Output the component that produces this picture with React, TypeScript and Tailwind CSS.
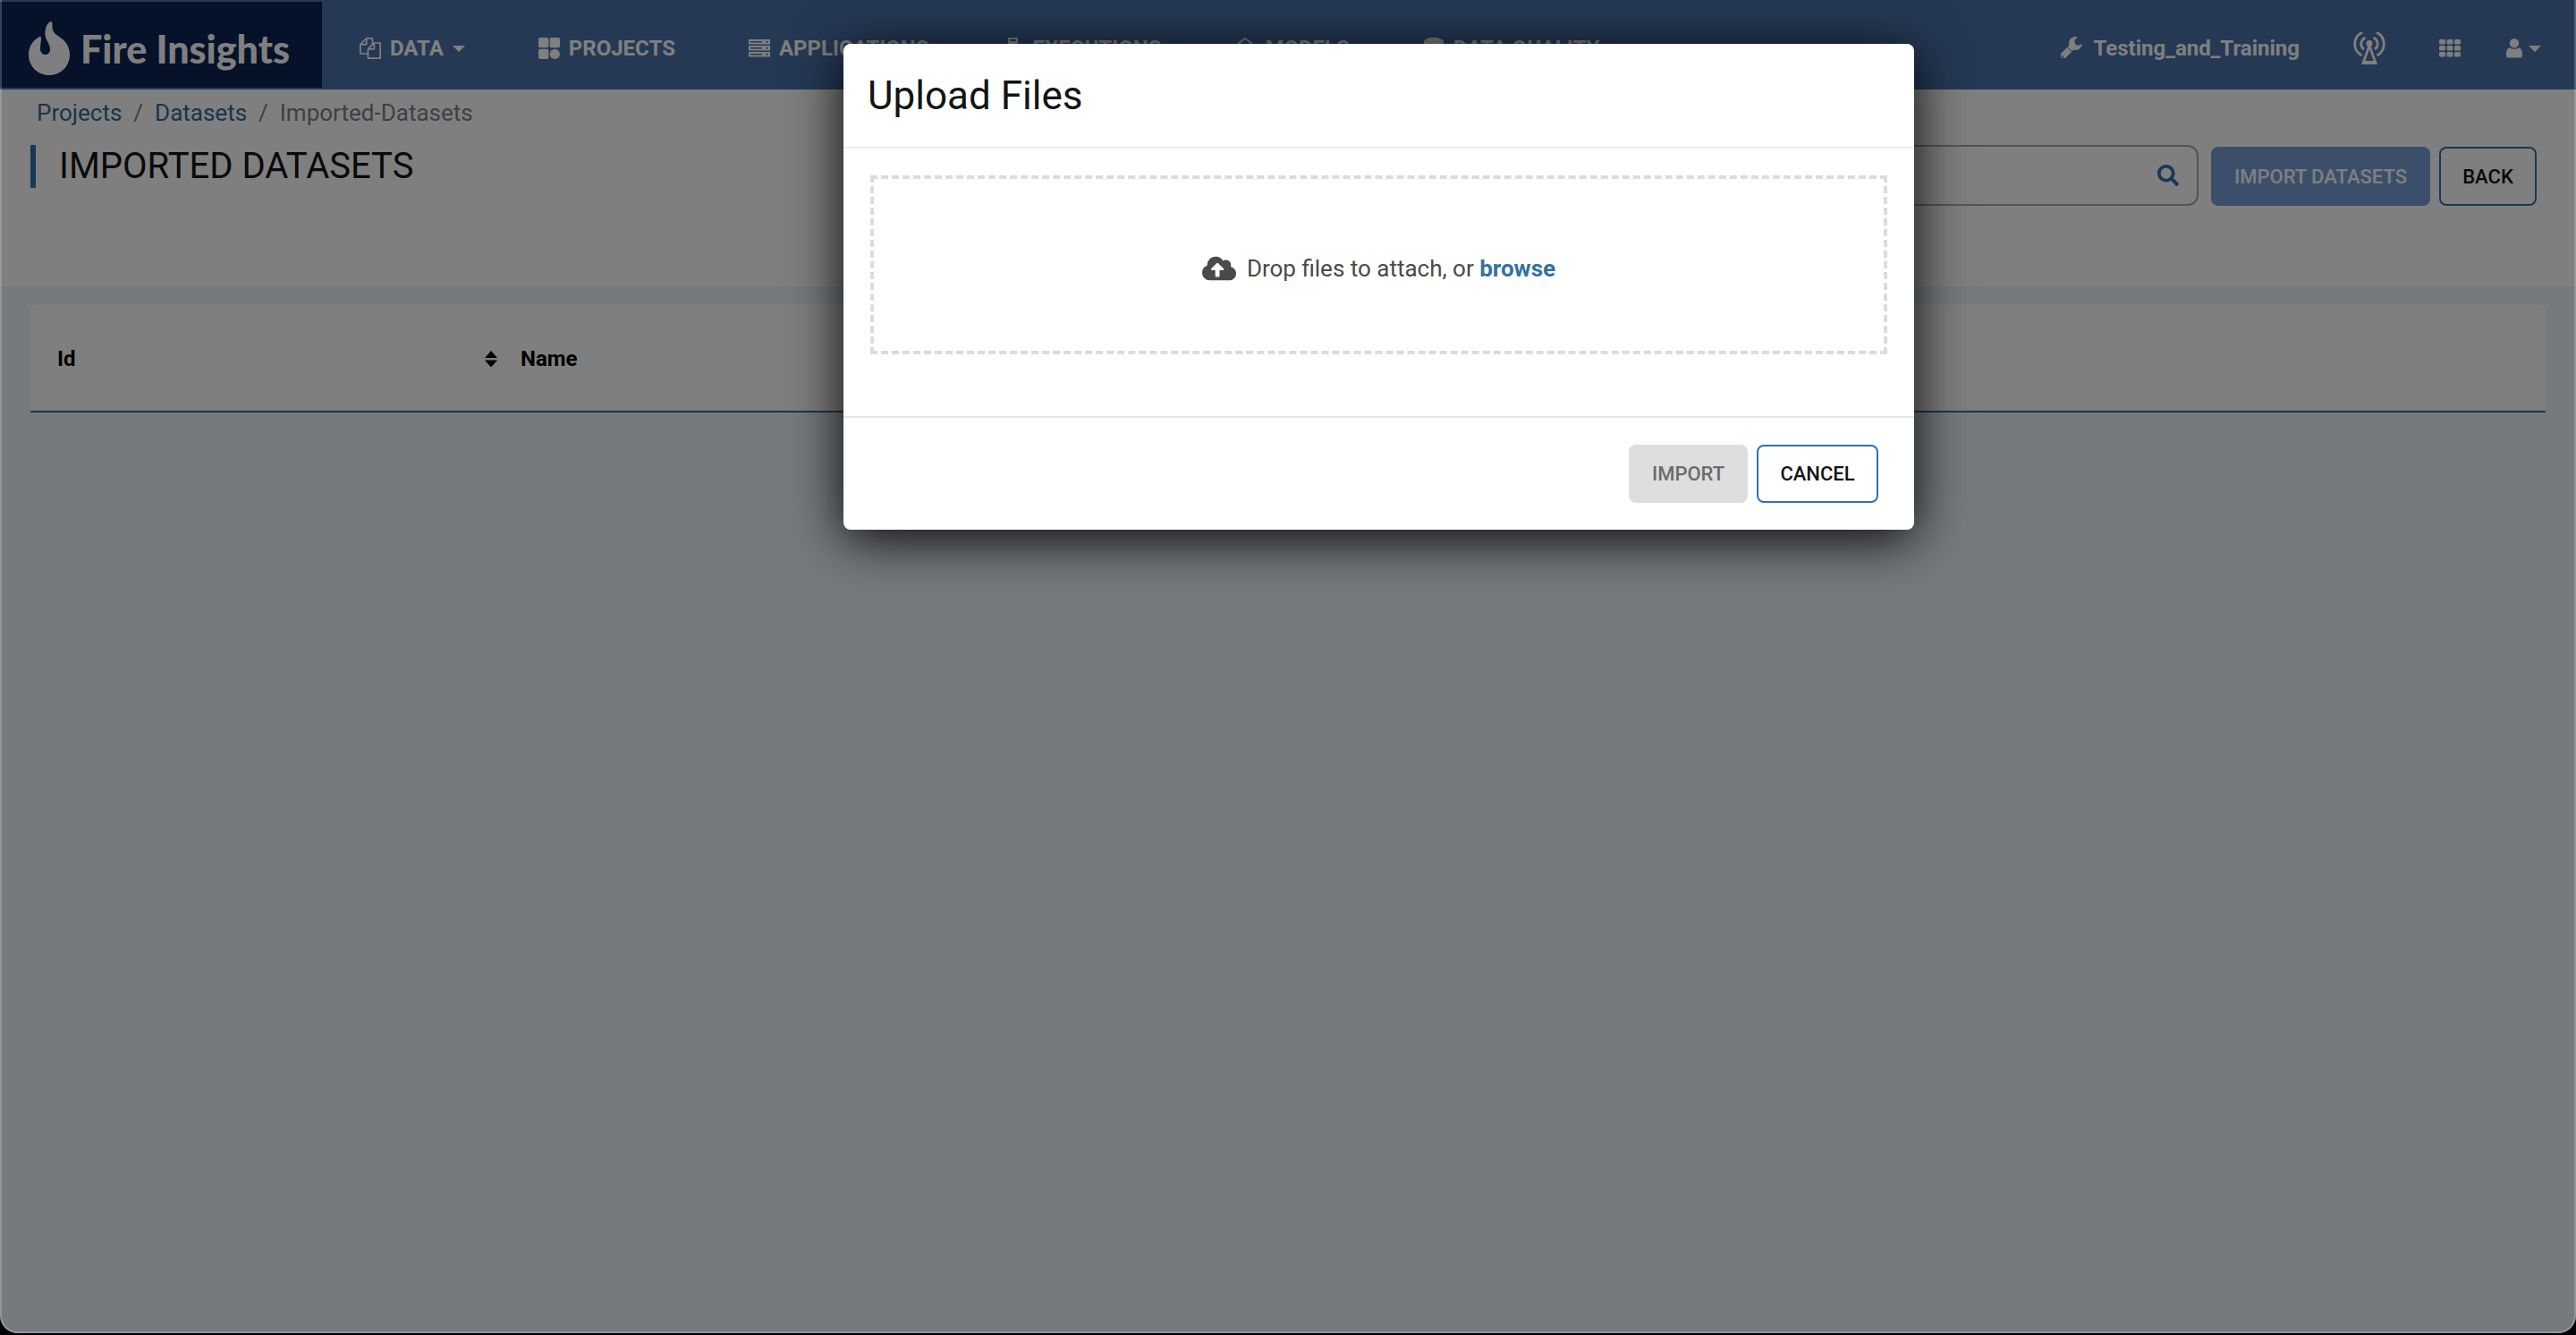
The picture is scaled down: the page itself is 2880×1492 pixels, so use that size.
import React from 'react';
import { FaSearch, FaCloudUploadAlt } from 'react-icons/fa';

function Flame() {
  return (
    <svg viewBox="0 0 46 60" className="h-[60px] w-[46px] shrink-0" fill="currentColor" aria-hidden="true">
      <path d="M25 0C21 1 18 7 18.500 15C19 21 24 25 24 31C24 35 21.500 37 18.500 37S13 34.500 13 30.500C13 25.500 14 22 14 19C14 17 13 16.500 11.500 17.500C5 21 0 28 0 37C0 50 10 60 23 60S46 50 46 37C46 28 41 21 34 17C29 14 26 10 26.500 4C26.500 1 26 0 25 0z" />
    </svg>
  );
}

function FilesIcon() {
  return (
    <svg viewBox="0 0 1792 1792" className="size-6" fill="currentColor" aria-hidden="true">
      <path d="M1696 384q40 0 68 28t28 68v1216q0 40-28 68t-68 28h-960q-40 0-68-28t-28-68v-288h-544q-40 0-68-28t-28-68v-672q0-40 20-88t48-76l408-408q28-28 76-48t88-20h416q40 0 68 28t28 68v328q68-40 128-40h416zm-544 213l-299 299h299v-299zm-640-384l-299 299h299v-299zm196 647l316-316v-416h-384v416q0 40-28 68t-68 28h-416v640h512v-256q0-40 20-88t48-76zm956 804v-1152h-384v416q0 40-28 68t-68 28h-416v640h896z" />
    </svg>
  );
}

function BlocksIcon() {
  return (
    <svg viewBox="0 0 24 24" className="size-6" fill="currentColor" aria-hidden="true">
      <rect width="11.4" height="11.2" rx="2" />
      <rect x="12.6" width="11.4" height="11.2" rx="2" />
      <rect y="12.8" width="11.4" height="11.2" rx="2" />
      <circle cx="18.3" cy="18.4" r="5.6" />
    </svg>
  );
}

function ServerIcon() {
  return (
    <svg viewBox="0 0 24 24" className="size-6" aria-hidden="true">
      {[2, 9, 16].map((y) => (
        <path
          key={y}
          fill="currentColor"
          fillRule="evenodd"
          d={`M0 ${y}h24v5.500H0zM2 ${y + 2}h13v1.500H2zM19.500 ${y + 1.8}h2v2h-2z`}
        />
      ))}
    </svg>
  );
}

function FlaskIcon() {
  return (
    <svg viewBox="0 0 24 24" className="size-6" fill="currentColor" aria-hidden="true">
      <path d="M7 1h9v4H7z" fill="none" stroke="currentColor" strokeWidth="2" />
      <path d="M6 4h11v7l4 13H2l4-13z" />
    </svg>
  );
}

function CubeIcon() {
  return (
    <svg viewBox="0 0 24 24" className="size-6" fill="none" stroke="currentColor" strokeWidth="2" aria-hidden="true">
      <path d="M12 1l7 5v12l-7 5-7-5V6zM5 6l7 5 7-5M12 11v12" />
    </svg>
  );
}

function DatabaseIcon() {
  return (
    <svg viewBox="0 0 24 24" className="size-6" fill="currentColor" aria-hidden="true">
      <path d="M1 5c0-3 5-5 11-5s11 2 11 5v14c0 3-5 5-11 5S1 22 1 19z" />
    </svg>
  );
}

function WrenchIcon() {
  return (
    <svg viewBox="0 0 26 26" className="size-[26px]" aria-hidden="true">
      <mask id="wrench-cut">
        <path fill="white" d="M0 0h26v26H0z" />
        <circle cx="21.500" cy="5.500" r="4.200" fill="black" />
        <path d="M20 1l3-3 6 8-5 3z" fill="black" />
        <circle cx="4" cy="22.500" r="1.300" fill="black" />
        <path d="M8 10.500l8 7.500" stroke="black" strokeWidth="1" />
      </mask>
      <g mask="url(#wrench-cut)">
        <circle cx="18.500" cy="7.500" r="7.500" fill="currentColor" />
        <path d="M4 22L16 10" stroke="currentColor" strokeWidth="7" strokeLinecap="round" />
      </g>
    </svg>
  );
}

function AntennaIcon() {
  return (
    <svg viewBox="0 0 36 36" className="size-9" fill="none" stroke="currentColor" strokeWidth="2.8" aria-hidden="true">
      <path d="M10 0C-1 6-1 20 9.500 26M26 0c11 6 11 20 .5 26M13.500 6c-6 3-6 10-1.500 13M22.500 6c6 3 6 10 1.500 13" />
      <circle cx="18" cy="12.500" r="3.500" fill="currentColor" stroke="none" />
      <path d="M18 15l-7 19.500h14z" />
      <path d="M10 34h16" strokeWidth="4" />
    </svg>
  );
}

function GridIcon() {
  return (
    <svg viewBox="0 0 24 20" className="h-5 w-6" fill="currentColor" aria-hidden="true">
      {[0, 7, 14].map((y) => [0, 8.5, 17].map((x) => <rect key={`${x}-${y}`} x={x} y={y} width="7" height="5.5" rx="1.5" />))}
    </svg>
  );
}

function UserIcon() {
  return (
    <svg viewBox="0 0 18 22" className="h-[22px] w-[18px]" fill="currentColor" aria-hidden="true">
      <ellipse cx="9" cy="5.2" rx="5.200" ry="5.200" />
      <path d="M3.500 10.200c3.500 2 7.500 2 11 0C17 11 18 14 18 18c0 3-1 3.500-3 3.500H3c-2 0-3-.5-3-3.500 0-4 1-7 3.500-7.800z" />
    </svg>
  );
}

function Caret() {
  return (
    <svg viewBox="0 0 14 7" className="h-[7px] w-[14px]" fill="currentColor" aria-hidden="true">
      <path d="M0 0h14L7 7z" />
    </svg>
  );
}

function SortIcon() {
  return (
    <svg viewBox="0 0 14 18" className="h-[18px] w-[14px]" fill="currentColor" aria-hidden="true">
      <path d="M7 0l7 8H0zM0 10.500h14l-7 8z" />
    </svg>
  );
}

const navItem = 'flex items-center gap-2.5 text-2xl font-bold text-white';

function Header() {
  return (
    <header className="flex h-[100px] items-stretch border-y-2 border-[#4a72aa] bg-[#4a72aa] text-white">
      <a href="#home" className="flex w-[360px] shrink-0 items-center gap-3 bg-[#0a2454] pt-2 pl-8">
        <Flame />
        <span className="font-['Lato'] text-[43px] leading-none font-black">Fire Insights</span>
      </a>
      <nav className="flex items-center gap-[82px] pt-2 pl-[42px] whitespace-nowrap">
        <button className={navItem}>
          <FilesIcon />
          DATA
          <Caret />
        </button>
        <a href="#projects" className={navItem}><BlocksIcon />PROJECTS</a>
        <a href="#applications" className={navItem}><ServerIcon />APPLICATIONS</a>
        <a href="#executions" className={navItem}><FlaskIcon />EXECUTIONS</a>
        <a href="#models" className={navItem}><CubeIcon />MODELS</a>
        <a href="#quality" className={navItem}><DatabaseIcon />DATA QUALITY</a>
      </nav>
      <div className="ml-auto flex items-center pt-2 pr-[39px]">
        <a href="#group" className="flex items-center gap-3 text-2xl font-bold"><WrenchIcon />Testing_and_Training</a>
        <button aria-label="Status" className="ml-[60px]"><AntennaIcon /></button>
        <button aria-label="Apps" className="ml-[60px]"><GridIcon /></button>
        <button aria-label="Account" className="ml-[51px] flex items-center gap-[7px]"><UserIcon /><Caret /></button>
      </div>
    </header>
  );
}

function PageHead() {
  return (
    <section className="flex h-[220px] justify-between bg-white pr-11 pl-[34px]">
      <div>
        <nav aria-label="Breadcrumb" className="flex gap-[13px] pt-2 pl-[7px] text-[26px] leading-9 text-[#7b8188]">
          <a href="#projects" className="text-[#2e6b99]">Projects</a>
          <span>/</span>
          <a href="#datasets" className="text-[#2e6b99]">Datasets</a>
          <span>/</span>
          <span>Imported-Datasets</span>
        </nav>
        <h1 className="mt-[18px] border-l-[6px] border-[#2f71ad] pl-[26px] text-[40px] leading-[48px] text-[#141414]">IMPORTED DATASETS</h1>
      </div>
      <div className="flex items-start pt-[62px]">
        <label className="flex h-[68px] w-[620px] items-center rounded-xl border-2 border-[#a8a8a8] pr-5 text-[#2f71ad]">
          <input aria-label="Search" className="min-w-0 flex-1 outline-none" />
          <FaSearch className="size-6" />
        </label>
        <button className="mt-0.5 ml-3.5 h-[66px] w-[245px] rounded-lg bg-[#779ed6] text-[22px] font-medium text-white">IMPORT DATASETS</button>
        <button className="mt-0.5 ml-2.5 h-[66px] w-[109px] rounded-lg border-2 border-[#2f71ad] text-[22px] font-medium text-[#141414]">BACK</button>
      </div>
    </section>
  );
}

function UploadDialog() {
  return (
    <div className="absolute inset-0 flex items-start justify-center bg-black/50 pt-[49px] pl-[203px]">
      <div
        role="dialog"
        aria-labelledby="upload-title"
        className="w-[1197px] rounded-lg bg-white text-[#141414] shadow-[0_10px_60px_rgba(0,0,0,0.95)]"
      >
        <h2 id="upload-title" className="border-b-2 border-[#e9ecef] pt-[30px] pb-[29px] pl-[27px] text-[44px] leading-[56px]">Upload Files</h2>
        <div className="px-[30px] pt-[30px] pb-[69px]">
          <div className="flex h-[200px] items-center justify-center gap-3 border-4 border-dashed border-[#dcdcdc] pt-2 text-[26px] text-[#4a4a4a]">
            <FaCloudUploadAlt className="size-[38px]" />
            <p>Drop files to attach, or <a href="#browse" className="font-bold text-[#32729f]">browse</a></p>
          </div>
        </div>
        <div className="flex justify-end gap-2.5 border-t-2 border-[#e5e5e5] pt-[30px] pr-10 pb-[30px]">
          <button disabled className="h-[65px] w-[133px] rounded-lg bg-[#dedede] text-[22px] font-medium text-[#6b6b6b]">IMPORT</button>
          <button className="h-[65px] w-[136px] rounded-lg border-2 border-[#2f71b5] text-[22px] font-medium">CANCEL</button>
        </div>
      </div>
    </div>
  );
}

export default function App() {
  return (
    <div className="h-screen bg-black pb-0.5 font-['Roboto',sans-serif]">
      <div className="relative h-full overflow-hidden rounded-b-[20px] bg-[#edf4fe]">
        <Header />
        <PageHead />
        <main className="px-[34px] pt-5">
          <table className="w-full table-fixed rounded-t-lg border-b-2 border-[#2f71ad] bg-white text-left text-2xl">
            <thead>
              <tr className="h-[120px]">
                <th className="w-[532px] pt-0.5 pr-2.5 pl-[30px]"><span className="flex items-center justify-between">Id<SortIcon /></span></th>
                <th className="pt-0.5 pl-4">Name</th>
              </tr>
            </thead>
          </table>
        </main>
        <UploadDialog />
        <div className="pointer-events-none absolute inset-0 rounded-b-[20px] border-x-2 border-b-2 border-white/20" />
      </div>
    </div>
  );
}
